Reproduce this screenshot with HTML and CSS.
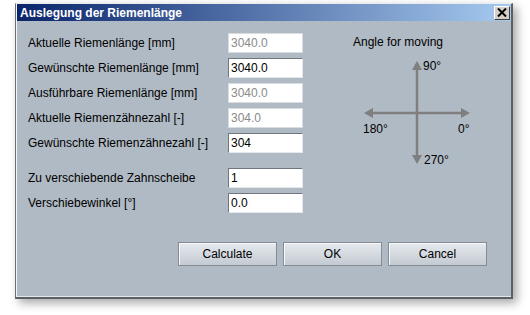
FILE: index.html
```html
<!DOCTYPE html>
<html lang="de">
<head>
    <meta charset="UTF-8">
    <title>Auslegung der Riemenlänge</title>
    <link rel="stylesheet" href="styles.css">
</head>
<body>
    <div class="window">
        <div class="titlebar">
            <span class="title">Auslegung der Riemenlänge</span>
            <button class="close" title="Schließen">
                <svg width="10" height="9" viewBox="0 0 10 9">
                    <path d="M1 0.5 L9 8.5 M9 0.5 L1 8.5" stroke="#000" stroke-width="2"/>
                </svg>
            </button>
        </div>

        <div class="panel">
            <div class="content">
                <div class="form">
                    <div class="row">
                        <label>Aktuelle Riemenlänge [mm]</label>
                        <input type="text" value="3040.0" disabled>
                    </div>
                    <div class="row">
                        <label>Gewünschte Riemenlänge [mm]</label>
                        <input type="text" value="3040.0">
                    </div>
                    <div class="row">
                        <label>Ausführbare Riemenlänge [mm]</label>
                        <input type="text" value="3040.0" disabled>
                    </div>
                    <div class="row">
                        <label>Aktuelle Riemenzähnezahl [-]</label>
                        <input type="text" value="304.0" disabled>
                    </div>
                    <div class="row">
                        <label>Gewünschte Riemenzähnezahl [-]</label>
                        <input type="text" value="304">
                    </div>
                    <div class="row spaced">
                        <label>Zu verschiebende Zahnscheibe</label>
                        <input type="text" value="1">
                    </div>
                    <div class="row">
                        <label>Verschiebewinkel [°]</label>
                        <input type="text" value="0.0">
                    </div>
                </div>

                <div class="angle">
                    <div class="angle-title">Angle for moving</div>
                    <svg class="cross" width="150" height="120" viewBox="0 0 150 120">
                        <g stroke="#7f7f7f" stroke-width="2.5">
                            <line x1="84" y1="16" x2="84" y2="104"/>
                            <line x1="38" y1="61" x2="130" y2="61"/>
                        </g>
                        <g fill="#7f7f7f">
                            <polygon points="84,9 79,18 89,18"/>
                            <polygon points="84,112 79,103 89,103"/>
                            <polygon points="31,61 40,56 40,66"/>
                            <polygon points="137,61 128,56 128,66"/>
                        </g>
                        <g class="deg">
                            <text x="90" y="18">90°</text>
                            <text x="30" y="81">180°</text>
                            <text x="125" y="81">0°</text>
                            <text x="91" y="112">270°</text>
                        </g>
                    </svg>
                </div>
            </div>

            <div class="buttons">
                <button class="btn">Calculate</button>
                <button class="btn">OK</button>
                <button class="btn">Cancel</button>
            </div>
        </div>
    </div>
</body>
</html>
```

FILE: styles.css
```css
* {
    margin: 0;
    padding: 0;
    box-sizing: border-box;
    font-family: 'Liberation Sans', Arial, sans-serif;
}

body {
    background: #ffffff;
    width: 530px;
    height: 315px;
    overflow: hidden;
}

.window {
    margin: 3px 0 0 15px;
    width: 498px;
    height: 296px;
    background: #b0bac4;
    border-top: 1px solid #e8ecef;
    border-left: 1px solid #6a6e72;
    border-right: 2px solid #5c6064;
    border-bottom: 2px solid #5c6064;
    box-shadow: inset 1px 0 0 #f2f4f6, inset 0 -1px 0 #e3e8ec, 4px 4px 9px rgba(0, 0, 0, 0.35);
}

.titlebar {
    height: 17px;
    margin-left: 1px;
    background: linear-gradient(90deg, #0a246a, #a6caf0);
    display: flex;
    align-items: center;
    justify-content: space-between;
    padding: 0 1px 0 3px;
}

.title {
    color: #ffffff;
    font-weight: bold;
    font-size: 12px;
}

.close {
    width: 16px;
    height: 14px;
    background: #d4d0c8;
    border: 1px solid;
    border-color: #ffffff #404040 #404040 #ffffff;
    display: flex;
    align-items: center;
    justify-content: center;
}

.panel {
    padding: 9px 24px 0 12px;
}

.content {
    display: flex;
}

.form {
    width: 305px;
}

.row {
    display: flex;
    align-items: center;
    height: 25px;
}

.row.spaced {
    margin-top: 10px;
}

.row label {
    width: 200px;
    font-size: 12px;
    color: #000000;
}

.row input {
    width: 75px;
    height: 20px;
    padding: 0 2px;
    font-size: 12px;
    color: #000000;
    background: #ffffff;
    border: 1px solid;
    border-color: #6f767d #e4e8ec #e4e8ec #6f767d;
    outline: none;
}

.row input:disabled {
    color: #8a8a8a;
    border-color: #d8dde2;
}

.angle-title {
    width: 130px;
    text-align: center;
    font-size: 12px;
    line-height: 20px;
    margin-top: 2px;
}

.cross {
    display: block;
}

.deg text {
    font-size: 12px;
    fill: #000000;
}

.buttons {
    display: flex;
    justify-content: flex-end;
    gap: 6px;
    margin-top: 27px;
}

.btn {
    width: 99px;
    height: 24px;
    font-size: 12px;
    color: #000000;
    background: linear-gradient(#e6eaef, #c3cad1);
    border: 1px solid #858c93;
    box-shadow: inset 1px 1px 0 #f6f8fa;
}
```
